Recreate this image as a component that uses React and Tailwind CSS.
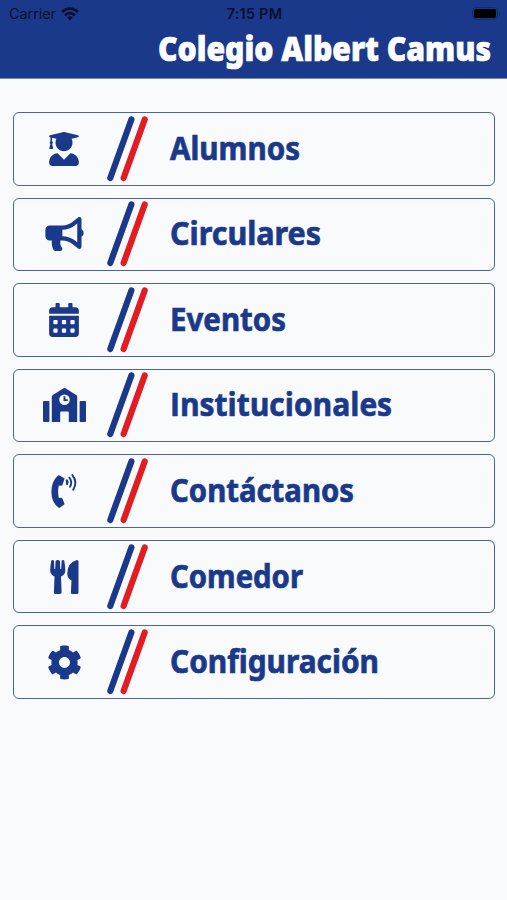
import { useLayoutEffect, useRef, useState } from "react";
import { FaBullhorn, FaCalendarAlt, FaCog, FaUserGraduate } from "react-icons/fa";

const SchoolIcon = ({ className }) => (
  <svg viewBox="0 0 43 34" className={className} fill="currentColor">
    <rect x="0" y="13" width="6.4" height="21" rx="1" />
    <rect x="36.6" y="13" width="6.4" height="21" rx="1" />
    <path
      fillRule="evenodd"
      d="M20.5 0.3Q21.5 -0.3 22.5 0.3L33.5 7.2Q34.2 7.8 34.2 8.8V34H25.8V24.4Q25.8 23.4 24.8 23.4H18.2Q17.2 23.4 17.2 24.4V34H8.8V8.8Q8.8 7.8 9.5 7.2ZM21.5 6.4A5.3 5.3 0 1 0 21.5 17A5.3 5.3 0 1 0 21.5 6.4Z"
    />
    <path d="M20.5 8.2h1.9v3h2.4v1.9h-4.3z" />
  </svg>
);

const PhoneIcon = ({ className }) => (
  <svg viewBox="0 0 26 34" className={className}>
    <path
      fill="currentColor"
      d="M7 1.6Q7.7 1 8.5 1.4L12.9 3.9Q13.7 4.4 13.4 5.2L11.4 10.9Q11.1 11.8 10.2 11.7L7.8 11.5Q6.4 17.8 7.8 23.9L10.2 23.7Q11.1 23.6 11.4 24.5L13.4 29.4Q13.7 30.2 13 30.8L9 33.6Q8.2 34.2 7.4 33.6Q0.4 28 0.4 18Q0.4 7.6 7 1.6Z"
    />
    <g fill="none" stroke="currentColor" strokeWidth="1.9" strokeLinecap="round">
      <path d="M15.8 6.4Q16.9 7.9 16 9.7" strokeWidth="2.4" />
      <path d="M18.4 3.7Q21.8 8.1 19 12.7" />
      <path d="M21.4 1.1Q27 8.2 22.2 15.7" />
    </g>
  </svg>
);

const UtensilsIcon = ({ className }) => (
  <svg viewBox="0 0 29 34" className={className} fill="currentColor">
    <path d="M1.3 0.5Q2.9 -0.5 4 0.8L4.3 9H5.2L5.6 0.8Q7.8 -0.8 9.9 0.8L10.3 9H11.2L11.6 0.8Q12.9 -0.5 14.2 0.5Q15.3 6 15.3 10.6Q15.3 14.8 11 16.6L11.6 32.2Q11.6 34 9.9 34H5.5Q3.9 34 3.9 32.2L4.5 16.6Q0.2 14.8 0.2 10.6Q0.2 6 1.3 0.5Z" />
    <path d="M27 0Q28.5 0 28.5 1.5V32.4Q28.5 34 26.9 34H22.4Q20.8 34 20.9 32.4L21.5 20.4Q17.3 18.5 17.3 13.8Q17.6 2.2 27 0Z" />
  </svg>
);

const WifiIcon = () => (
  <svg viewBox="0 0 18 14" className="h-3.5 w-[18px]" fill="none" stroke="currentColor" strokeWidth="2.6">
    <path d="M1 4.9Q9 -1.9 17 4.9" />
    <path d="M3.9 8.2Q9 3.9 14.1 8.2" />
    <path d="M6.2 10.5Q9 8.1 11.8 10.5L9 13.6Z" fill="currentColor" stroke="none" />
  </svg>
);

const Slashes = () => (
  <svg viewBox="0 0 42 66" className="h-[66px] w-[42px] shrink-0" strokeWidth="6.2" strokeLinecap="round">
    <path d="M24.4 3.5L3.3 62" stroke="#1a398a" />
    <path d="M37.7 3.5L16.6 62" stroke="#e31b23" />
  </svg>
);

// Squeezes a line of text horizontally to the given width
const FitText = ({ width, className, children }) => {
  const ref = useRef(null);
  const [scale, setScale] = useState(1);

  useLayoutEffect(() => {
    setScale(width / parseFloat(getComputedStyle(ref.current).width));
  }, [width]);

  return (
    <span
      ref={ref}
      className={`inline-block origin-left whitespace-nowrap ${className}`}
      style={{ transform: `scaleX(${scale})` }}
    >
      {children}
    </span>
  );
};

const menu = [
  { label: "Alumnos", width: 130, icon: FaUserGraduate, size: "h-[34px] w-[30px]" },
  { label: "Circulares", width: 151, icon: FaBullhorn, size: "h-[34px] w-[39px]" },
  { label: "Eventos", width: 116, icon: FaCalendarAlt, size: "h-[34px] w-[30px]" },
  {
    label: "Institucionales",
    width: 222,
    icon: SchoolIcon,
    size: "h-[34px] w-[43px]",
    font: "font-['Open_Sans',sans-serif]",
  },
  { label: "Contáctanos", width: 184, icon: PhoneIcon, size: "h-[34px] w-[26px]" },
  { label: "Comedor", width: 133, icon: UtensilsIcon, size: "h-[34px] w-[29px]" },
  { label: "Configuración", width: 209, icon: FaCog, size: "h-[35px] w-[35px]" },
];

const StatusBar = () => (
  <div className="grid h-[27px] grid-cols-3 items-center pl-[9px] pr-[7px] font-[Inter,sans-serif] text-[14px] text-[#07102b]">
    <div className="flex items-center gap-[6px]">
      <FitText width={47} className="font-normal">
        Carrier
      </FitText>
      <WifiIcon />
    </div>
    <span className="text-center text-[14.5px] leading-5 font-semibold tracking-[0.2px]">7:15 PM</span>
    <div className="flex items-center justify-end gap-px">
      <div className="rounded-[4px] border border-[#132a68] p-px">
        <div className="h-[9px] w-[22px] rounded-[2px] bg-black" />
      </div>
      <div className="h-1 w-px rounded-r bg-[#132a68]" />
    </div>
  </div>
);

export default function App() {
  return (
    <div className="min-h-[900px] w-full bg-[#f8fafc] font-['Noto_Sans',sans-serif] font-bold">
      <header className="h-[79px] border-b border-[#6f86bd] bg-[#1a398b]">
        <StatusBar />
        <h1 className="flex h-[42px] items-center pl-[158px] text-white">
          <FitText width={333} className="text-[34px] leading-none font-black [-webkit-text-stroke:0.7px_#fff]">
            Colegio Albert Camus
          </FitText>
        </h1>
      </header>

      <nav className="flex flex-col gap-3 pr-3 pl-[13px] pt-[33px] text-[#1a398a]">
        {menu.map(({ label, width, icon: Icon, size, font = "" }) => (
          <button
            key={label}
            className="flex h-[73.57px] w-full items-center rounded-md border border-[#4c62a3] text-left"
          >
            <span className="flex w-[100px] shrink-0 justify-center">
              <Icon className={size} />
            </span>
            <span className="-ml-[7px] flex">
              <Slashes />
            </span>
            <span className="ml-[21px] flex pb-0.5">
              <FitText
                width={width}
                className={`text-[32px] leading-9 [-webkit-text-stroke:0.7px_#1a398a] ${font}`}
              >
                {label}
              </FitText>
            </span>
          </button>
        ))}
      </nav>
    </div>
  );
}
